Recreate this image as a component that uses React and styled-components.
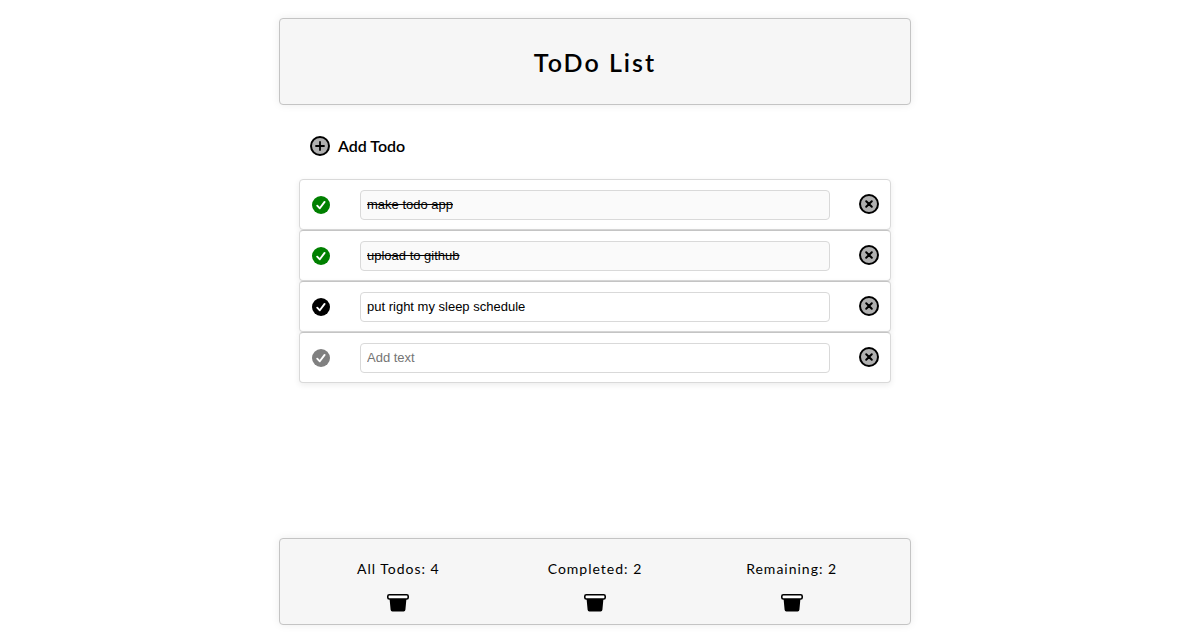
import React, { useState } from "react";
import styled, { createGlobalStyle } from "styled-components";

const GlobalStyle = createGlobalStyle`
  *, *::before, *::after { box-sizing: border-box; }
  body {
    margin: 0;
    background: #fff;
    color: #000;
    font-family: Lato, "Liberation Sans", sans-serif;
  }
`;

const Page = styled.div`
  display: flex;
  flex-direction: column;
  width: 100%;
  max-width: 632px;
  min-height: 100vh;
  margin: 0 auto;
  padding: 18px 0 17px;
`;

const Panel = styled.div`
  min-height: 87px;
  background: #f6f6f6;
  border: 1px solid #c4c4c4;
  border-radius: 4px;
  box-shadow: 0 0 8px rgba(0, 0, 0, 0.08);
`;

const Header = styled(Panel).attrs({ as: "header" })`
  display: flex;
  align-items: center;
  justify-content: center;
`;

const Title = styled.h1`
  margin: 0;
  font-size: 25px;
  line-height: 32px;
  font-weight: 600;
  letter-spacing: 2px;
`;

const Main = styled.main`
  flex: 1;
  padding: 28px 20px;
`;

const IconButton = styled.button`
  display: flex;
  align-items: center;
  padding: 0;
  border: 0;
  background: none;
  color: ${(p) => p.$color || "#000"};
  font: inherit;
  cursor: pointer;
`;

const AddButton = styled(IconButton)`
  gap: 7px;
  margin: 0 0 20px 10px;
  font-size: 16px;
  line-height: 26px;
  font-weight: 600;
`;

const DeleteButton = styled(IconButton)`
  padding-bottom: 2px;
`;

const List = styled.ul`
  margin: 0;
  padding: 0;
  list-style: none;
`;

const Item = styled.li`
  display: flex;
  align-items: center;
  height: 51px;
  padding: 0 10px;
  background: #fff;
  border: 1px solid #d9d9d9;
  border-radius: 4px;
  box-shadow: 0 2px 6px rgba(0, 0, 0, 0.08);

  & + & { border-top-color: #c4c4c4; }
`;

const Field = styled.input`
  flex: 1;
  min-width: 0;
  height: 30px;
  margin: 0 28px;
  padding: 0 6px;
  border: 1px solid #d9d9d9;
  border-radius: 4px;
  background: ${(p) => (p.$done ? "#fafafa" : "#fff")};
  color: #000;
  font-family: "Liberation Sans", Arial, sans-serif;
  font-size: 13px;
  text-decoration: ${(p) => (p.$done ? "line-through" : "none")};
  outline: none;

  &::placeholder { color: #757575; }
`;

const Footer = styled(Panel).attrs({ as: "footer" })`
  display: grid;
  grid-template-columns: repeat(3, 1fr);
  align-items: start;
  padding: 20px 20px 12px;
`;

const Stat = styled.div`
  display: flex;
  flex-direction: column;
  align-items: center;
  gap: 15px;
  font-size: 14px;
  line-height: 20px;
  letter-spacing: 1px;
`;

const Svg = styled.svg`
  display: block;
  flex: none;
`;

const PlusIcon = () => (
  <Svg width="22" height="22" viewBox="0 0 22 22" aria-hidden="true">
    <circle cx="11" cy="11" r="9" fill="#b0b0b0" stroke="#000" strokeWidth="2" />
    <path d="M11 7v8M7 11h8" stroke="#000" strokeWidth="1.8" strokeLinecap="round" />
  </Svg>
);

const CloseIcon = () => (
  <Svg width="22" height="22" viewBox="0 0 22 22" aria-hidden="true">
    <circle cx="11" cy="11" r="9" fill="#b0b0b0" stroke="#000" strokeWidth="2" />
    <path d="M8.2 8.2l5.6 5.6M13.8 8.2l-5.6 5.6" stroke="#000" strokeWidth="2" strokeLinecap="round" />
  </Svg>
);

const CheckIcon = () => (
  <Svg width="22" height="22" viewBox="0 0 22 22" aria-hidden="true">
    <circle cx="11" cy="11" r="9" fill="currentColor" />
    <path d="M7.2 11.7l2.6 2.6 4.8-6.4" fill="none" stroke="#fff" strokeWidth="1.9" strokeLinecap="round" strokeLinejoin="round" />
  </Svg>
);

const BinIcon = () => (
  <Svg width="22" height="18" viewBox="0 0 22 18" aria-hidden="true">
    <path d="M2.6 5h16.8l-1 10.8a1.8 1.8 0 0 1-1.8 1.7H5.4a1.8 1.8 0 0 1-1.8-1.7z" fill="#000" />
    <rect x="0.8" y="0.8" width="20.4" height="4.2" rx="1.5" fill="#fff" stroke="#000" strokeWidth="1.6" />
  </Svg>
);

const initialTodos = [
  { id: 1, text: "make todo app", done: true },
  { id: 2, text: "upload to github", done: true },
  { id: 3, text: "put right my sleep schedule", done: false },
  { id: 4, text: "", done: false },
];

const checkColor = (todo) => (todo.done ? "#008000" : todo.text ? "#000" : "#808080");

export default function App() {
  const [todos, setTodos] = useState(initialTodos);
  const completed = todos.filter((t) => t.done).length;

  const update = (id, change) =>
    setTodos((list) => list.map((t) => (t.id === id ? { ...t, ...change } : t)));
  const keep = (test) => setTodos((list) => list.filter(test));
  const add = () => setTodos((list) => [...list, { id: Date.now(), text: "", done: false }]);

  const stats = [
    { label: "All Todos", count: todos.length, clear: () => keep(() => false) },
    { label: "Completed", count: completed, clear: () => keep((t) => !t.done) },
    { label: "Remaining", count: todos.length - completed, clear: () => keep((t) => t.done) },
  ];

  return (
    <Page>
      <GlobalStyle />
      <Header>
        <Title>ToDo List</Title>
      </Header>
      <Main>
        <AddButton type="button" onClick={add}>
          <PlusIcon />
          Add Todo
        </AddButton>
        <List>
          {todos.map((todo) => (
            <Item key={todo.id}>
              <IconButton
                type="button"
                aria-label="Toggle todo"
                $color={checkColor(todo)}
                onClick={() => todo.text && update(todo.id, { done: !todo.done })}
              >
                <CheckIcon />
              </IconButton>
              <Field
                type="text"
                aria-label="Todo text"
                placeholder="Add text"
                value={todo.text}
                readOnly={todo.done}
                $done={todo.done}
                onChange={(e) => update(todo.id, { text: e.target.value })}
              />
              <DeleteButton type="button" aria-label="Delete todo" onClick={() => keep((t) => t.id !== todo.id)}>
                <CloseIcon />
              </DeleteButton>
            </Item>
          ))}
        </List>
      </Main>
      <Footer>
        {stats.map((stat) => (
          <Stat key={stat.label}>
            <span>{`${stat.label}: ${stat.count}`}</span>
            <IconButton type="button" aria-label={`Clear ${stat.label}`} onClick={stat.clear}>
              <BinIcon />
            </IconButton>
          </Stat>
        ))}
      </Footer>
    </Page>
  );
}
